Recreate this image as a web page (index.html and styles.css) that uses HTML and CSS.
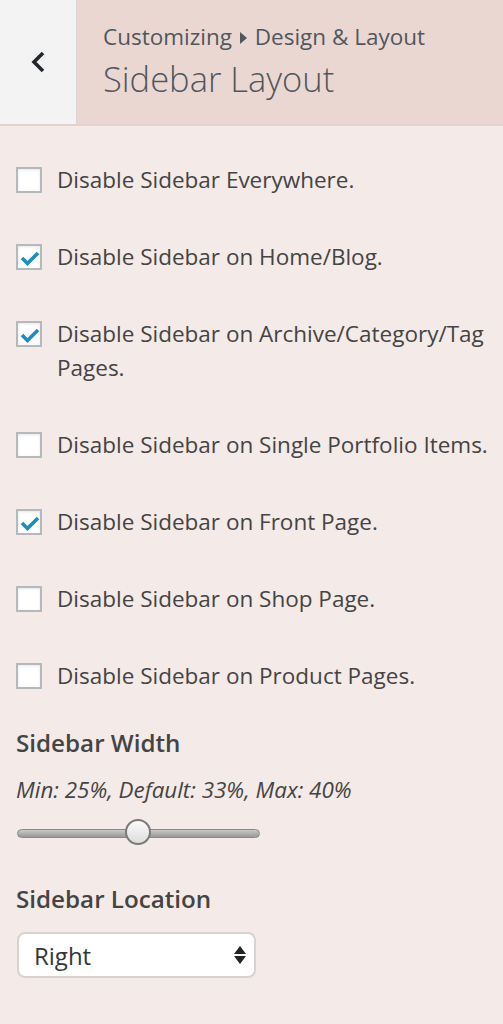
FILE: index.html
```html
<!DOCTYPE html>
<html>
<head>
<meta charset="utf-8">
<link rel="stylesheet" href="styles.css">
</head>
<body>
<div class="panel">
  <header class="head">
    <div class="back">
      <svg width="18" height="24" viewBox="0 0 18 24"><path d="M14 3 L5 12 L14 21" fill="none" stroke="#23282d" stroke-width="3.6" stroke-linecap="butt" stroke-linejoin="miter"/></svg>
    </div>
    <div class="titles">
      <div class="crumb">Customizing <span class="tri"></span> Design &amp; Layout</div>
      <div class="title">Sidebar Layout</div>
    </div>
  </header>
  <main class="body">
    <ul class="checks">
      <li class="row"><span class="box"></span><span class="lbl">Disable Sidebar Everywhere.</span></li>
      <li class="row"><span class="box on"><svg viewBox="0 0 22 22"><path d="M4 12 L9.5 17.5 L20 7" fill="none" stroke="#1e8cbe" stroke-width="3.6"/></svg></span><span class="lbl">Disable Sidebar on Home/Blog.</span></li>
      <li class="row"><span class="box on"><svg viewBox="0 0 22 22"><path d="M4 12 L9.5 17.5 L20 7" fill="none" stroke="#1e8cbe" stroke-width="3.6"/></svg></span><span class="lbl">Disable Sidebar on Archive/Category/Tag Pages.</span></li>
      <li class="row"><span class="box"></span><span class="lbl">Disable Sidebar on Single Portfolio Items.</span></li>
      <li class="row"><span class="box on"><svg viewBox="0 0 22 22"><path d="M4 12 L9.5 17.5 L20 7" fill="none" stroke="#1e8cbe" stroke-width="3.6"/></svg></span><span class="lbl">Disable Sidebar on Front Page.</span></li>
      <li class="row"><span class="box"></span><span class="lbl">Disable Sidebar on Shop Page.</span></li>
      <li class="row"><span class="box"></span><span class="lbl">Disable Sidebar on Product Pages.</span></li>
    </ul>
    <h3 class="sec">Sidebar Width</h3>
    <p class="desc">Min: 25%, Default: 33%, Max: 40%</p>
    <div class="slider"><div class="track"></div><div class="thumb"></div></div>
    <h3 class="sec loc">Sidebar Location</h3>
    <div class="select"><span>Right</span><span class="arrows"><i class="up"></i><i class="down"></i></span></div>
  </main>
</div>
</body>
</html>
```
FILE: styles.css
```css
* { box-sizing: border-box; }
html, body { margin: 0; padding: 0; }
body { background: #f4eae7; font-family: "Open Sans", "Noto Sans", sans-serif; color: #444; }
.panel { width: 503px; height: 1024px; }
.head { display: flex; height: 126px; background: #ebd7d2; border-bottom: 2px solid #e4d2cd; }
.back { width: 77px; background: #f3f3f3; border-right: 1px solid #ddd3d1; display: flex; align-items: center; justify-content: center; padding-right: 1px; }
.titles { padding: 21px 0 0 26px; }
.crumb { font-size: 22.5px; line-height: 32px; color: #50575e; }
.tri { display: inline-block; width: 0; height: 0; border-top: 6px solid transparent; border-bottom: 6px solid transparent; border-left: 7px solid #50575e; margin: 0 2px 0 2px; vertical-align: 1px; }
.title { font-size: 34.5px; line-height: 46px; font-weight: 300; color: #50575e; margin-top: 3px; }
.body { padding: 37px 8px 0 16px; }
.checks { list-style: none; margin: 0; padding: 0; display: flex; flex-direction: column; gap: 43px; }
.row { display: flex; align-items: flex-start; }
.box { flex: none; width: 26px; height: 26px; margin-top: 4px; background: #fff; border: 2px solid #b4b9be; box-shadow: inset 0 1px 3px rgba(0,0,0,0.1); display: flex; align-items: center; justify-content: center; }
.box svg { width: 22px; height: 22px; }
.lbl { margin-left: 15px; font-size: 22.5px; line-height: 34px; color: #444; }
.sec { margin: 35px 0 0 0; font-size: 24.2px; line-height: 30px; font-weight: 600; color: #444; }
.desc { margin: 17px 0 0 0; font-size: 22.4px; line-height: 30px; font-style: italic; color: #444; }
.slider { position: relative; width: 243px; height: 28px; margin: 14px 0 0 1px; }
.track { position: absolute; left: 0; right: 0; top: 10px; height: 9px; border-radius: 5px; background: linear-gradient(#c8c8c8, #999); border: 1px solid #8a8a8a; }
.thumb { position: absolute; left: 108px; top: 0; width: 26px; height: 26px; border-radius: 50%; background: linear-gradient(#fbfbfb, #ddd); border: 2px solid #7a7a7a; }
.loc { margin-top: 37px; }
.select { display: flex; align-items: center; justify-content: space-between; width: 239px; height: 46px; margin: 18px 0 0 1px; background: #fff; border: 2px solid #d8d2d0; border-radius: 8px; padding: 0 8px 0 15px; font-size: 24px; color: #32373c; }
.arrows { display: flex; flex-direction: column; gap: 2px; }
.arrows i { display: block; width: 0; height: 0; border-left: 6px solid transparent; border-right: 6px solid transparent; }
.up { border-bottom: 8px solid #222; }
.down { border-top: 8px solid #222; }
```
